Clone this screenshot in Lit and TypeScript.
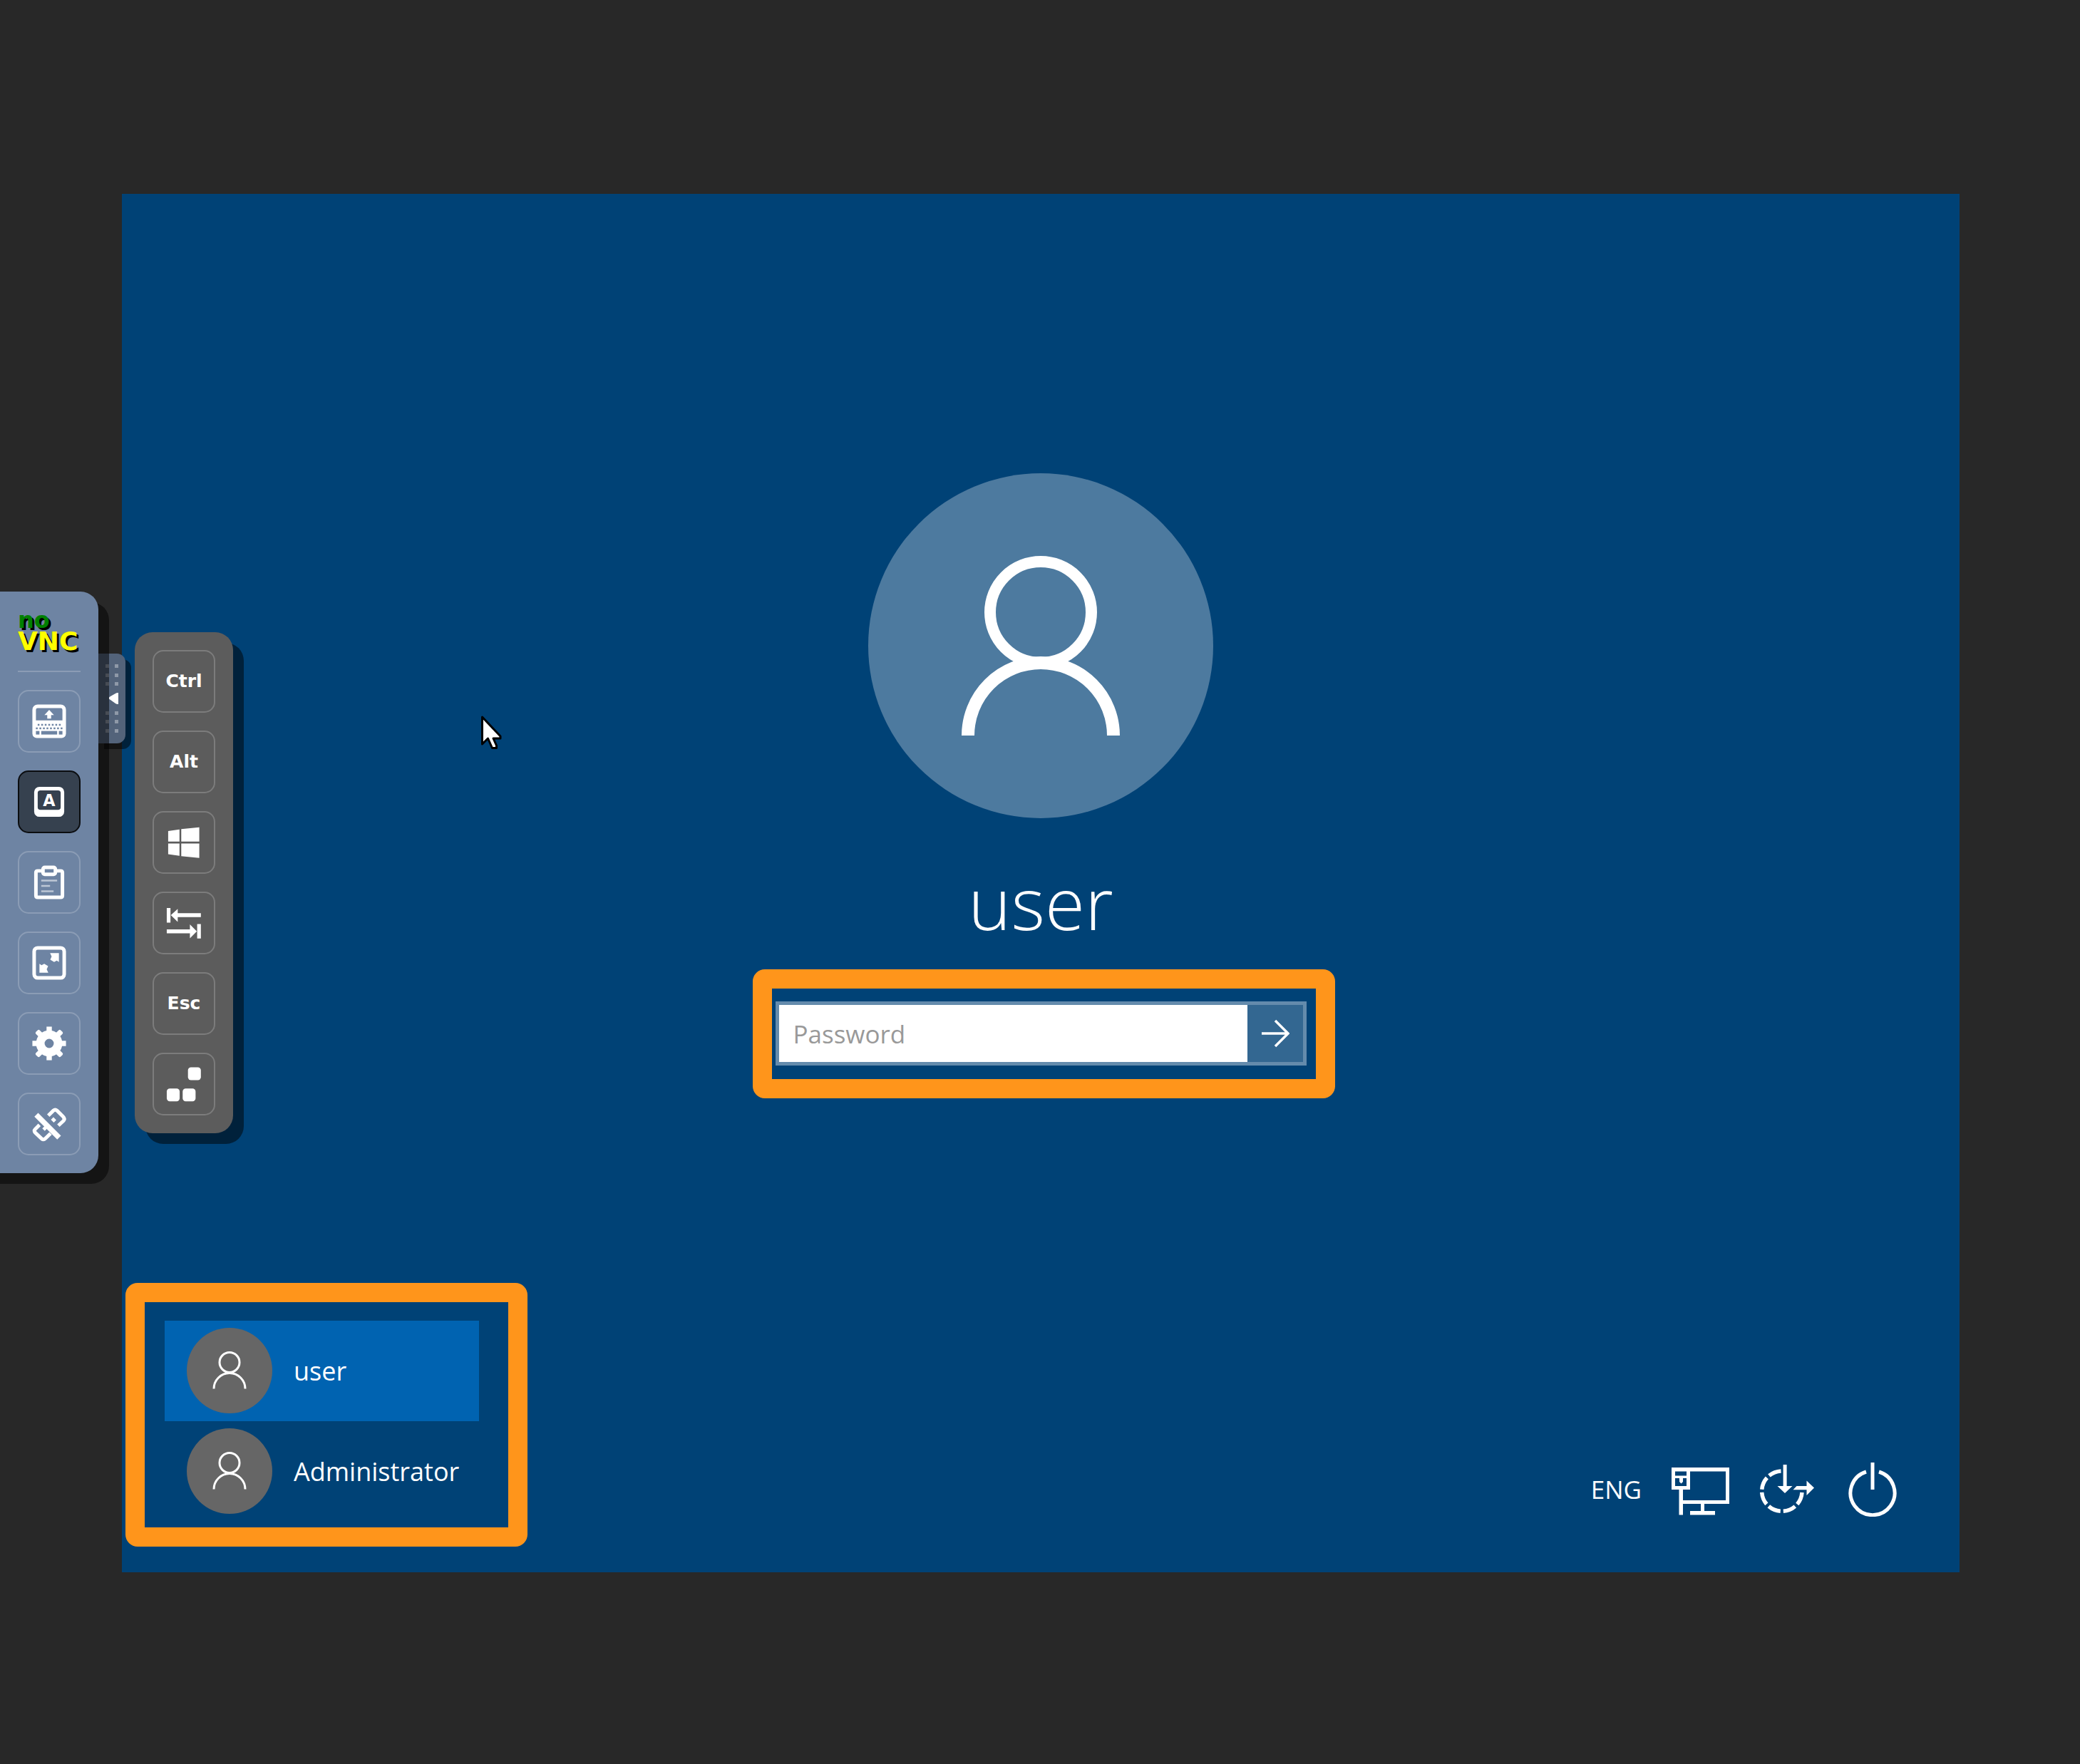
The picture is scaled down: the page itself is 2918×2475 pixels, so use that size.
import { LitElement, html, css, svg, type SVGTemplateResult } from "lit";
import { customElement, property } from "lit/decorators.js";

/* 25-unit glyphs used on the two tool panels. */
const range = (from: number, count: number) => Array.from({ length: count }, (_, i) => from + i * 2);

const glyphs: Record<string, SVGTemplateResult> = {
  keyboard: svg`
    <path fill-rule="evenodd" d="M6 3H19A3 3 0 0 1 22 6V19.500A2.500 2.500 0 0 1 19.500 22H5.500A2.500 2.500 0 0 1 3 19.500V6A3 3 0 0 1 6 3ZM6 5A1 1 0 0 0 5 6V12H20V6A1 1 0 0 0 19 5Z"/>
    <path d="M12.500 6L15.200 9H13.600V11H11.400V9H9.800Z"/>
    <g class="cut">
      ${range(6, 7).map((x) => svg`<rect x=${x} y="14" width="1" height="1"/>`)}
      ${range(5, 8).map((x) => svg`<rect x=${x} y="16" width="1" height="1"/>`)}
      <rect x="5" y="18" width="2" height="2"/><rect x="8" y="18" width="9" height="2"/><rect x="18" y="18" width="2" height="2"/>
    </g>`,
  keys: svg`
    <path fill-rule="evenodd" d="M7 4H18A3 3 0 0 1 21 7V18A3 3 0 0 1 18 21H7A3 3 0 0 1 4 18V7A3 3 0 0 1 7 4ZM7.500 6A1.500 1.500 0 0 0 6 7.500V15.500A1.500 1.500 0 0 0 7.500 17H17.500A1.500 1.500 0 0 0 19 15.500V7.500A1.500 1.500 0 0 0 17.500 6Z"/>
    <text x="12.500" y="14.800" text-anchor="middle" font-size="9">A</text>`,
  clipboard: svg`
    <path d="M9 6H6Q5 6 5 7V20Q5 21 6 21H19Q20 21 20 20V7Q20 6 19 6H16" fill="none" stroke="#fff" stroke-width="2"/>
    <path fill-rule="evenodd" d="M10 3H15A2 2 0 0 1 17 5V7A2 2 0 0 1 15 9H10A2 2 0 0 1 8 7V5A2 2 0 0 1 10 3ZM10 5V7H15V5Z"/>
    <path d="M8 11H17V12H8ZM8 14H13V15H8ZM8 17H15V18H8Z" opacity="0.550"/>`,
  fullscreen: svg`
    <rect x="4" y="4" width="17" height="17" rx="2" fill="none" stroke="#fff" stroke-width="2"/>
    <path d="M13 7H18V12L16.800 11.200L15.300 12L13.100 10.700L13.900 8.900Z"/>
    <path d="M12 18H7V13L8.200 13.800L9.700 13L11.900 14.300L11.100 16.100Z"/>`,
  settings: svg`
    <circle cx="12.500" cy="12.500" r="5" fill="none" stroke="#fff" stroke-width="4.800"/>
    ${[0, 90, 180, 270].map((a) => svg`<rect x="11" y="3" width="3" height="4" transform=${`rotate(${a} 12.5 12.5)`}/>`)}
    ${[45, 135, 225, 315].map((a) => svg`<rect x="11" y="2.600" width="3" height="4.400" rx="0.800" transform=${`rotate(${a} 12.5 12.5)`}/>`)}`,
  disconnect: svg`
    <g fill="none" stroke="#fff" stroke-width="2">
      <path d="M12 7.800L14.900 4.900Q15.900 4 16.900 4.900L20.300 8.300Q21.600 9.600 20.600 10.700L17.700 13.400"/>
      <path d="M7 13L4.600 15.400Q3.600 16.400 4.600 17.400L8.200 20.800Q9.300 21.800 10.400 20.700L13.300 17.800"/>
      <path d="M14.200 9.400L15.800 11M9.300 15.700L11.500 13.500"/>
      <path d="M5.200 7.300L18.100 20.200" stroke-width="3"/>
    </g>`,
  windows: svg`
    <path d="M3.600 6L10 5.100V12H3.600ZM11 4.950L21.200 3.900V12H11ZM3.600 13.100H10V20.100L3.600 19.200ZM11 13.100H21.200V21.300L11 20.250Z"/>`,
  tab: svg`
    <path d="M2.800 4H4.900V12.300H2.800ZM5.100 8.100L9 4.500V7H22.100V9.200H9V11.900ZM2.800 16.100H15.900V13.300L19.800 17.200L15.900 21.200V18.300H2.800ZM20 13.100H22.100V21.300H20Z"/>`,
  cad: svg`
    <rect x="14.800" y="3" width="7.300" height="7.300" rx="1.700"/>
    <rect x="2.800" y="15" width="7.300" height="7.300" rx="1.700"/>
    <rect x="11.800" y="15" width="7.300" height="7.300" rx="1.700"/>`,
};

@customElement("tool-button")
class ToolButton extends LitElement {
  @property() glyph = "";
  @property() text = "";
  @property() name = "";
  @property({ type: Boolean, reflect: true }) pressed = false;

  static styles = css`
    :host { display: block; }
    .tool {
      display: grid;
      place-items: center;
      box-sizing: border-box;
      width: 88px;
      height: 88px;
      padding: 0;
      border: 2px solid rgba(255, 255, 255, 0.2);
      border-radius: 15px;
      background: none;
      color: #fff;
      font: bold 25px/30px "DejaVu Sans", sans-serif;
    }
    :host([pressed]) .tool { border-color: #0b0d10; background: #36414f; }
    .glyph { display: block; width: 62px; height: 62px; fill: #fff; }
    .glyph text { font-family: "DejaVu Sans", sans-serif; font-weight: bold; }
    .cut { fill: #6e84a3; }
  `;

  render() {
    return html`<button class="tool" type="button" aria-label=${this.name} aria-pressed=${this.pressed}>
      ${this.glyph
        ? html`<svg class="glyph" viewBox="0 0 25 25" aria-hidden="true">${glyphs[this.glyph]}</svg>`
        : this.text}
    </button>`;
  }
}

@customElement("vnc-tools")
class VncTools extends LitElement {
  static styles = css`
    :host { display: block; }
    .tools { display: flex; align-items: center; gap: 51px; height: 100%; isolation: isolate; }
    .panel {
      position: relative;
      display: flex;
      flex-direction: column;
      align-items: center;
      gap: 25px;
      padding: 25px;
      border-radius: 25px;
      box-shadow: 15px 15px 0 rgba(0, 0, 0, 0.5);
    }
    /* The bar starts off-screen so that its shadow reaches the window edge. */
    .bar { margin-left: -15px; padding-left: 40px; border-radius: 0 25px 25px 0; background: #6e84a3; }
    .keys { margin-top: 2px; background: #5c5c5c; }
    .logo {
      width: 88px;
      height: 61px;
      margin: 0;
      white-space: pre-line;
      font: bold 36px/30px "DejaVu Sans", sans-serif;
      color: #ff0;
      text-shadow: 3px 3px 0 #000;
    }
    .logo::first-line { font-size: 32px; color: #008000; }
    .rule { width: 88px; height: 2px; margin: 0; border: 0; background: rgba(255, 255, 255, 0.2); }
    .handle {
      position: absolute;
      z-index: -1;
      top: 87px;
      left: 100%;
      width: 38px;
      height: 126px;
      padding: 0;
      border: 0;
      border-radius: 0 12px 12px 0;
      background: #53637a;
      box-shadow: 8px 8px 0 rgba(0, 0, 0, 0.5);
    }
    .dots { display: block; width: 38px; height: 126px; fill: rgba(255, 255, 255, 0.35); }
    .arrow { position: absolute; top: 142px; left: calc(100% + 15px); width: 13px; height: 16px; fill: #fff; pointer-events: none; }
  `;

  render() {
    return html`<nav class="tools">
      <div class="panel bar">
        <h1 class="logo">${"no\nVNC"}</h1>
        <hr class="rule" />
        <tool-button glyph="keyboard" name="Show keyboard"></tool-button>
        <tool-button glyph="keys" name="Show extra keys" pressed></tool-button>
        <tool-button glyph="clipboard" name="Clipboard"></tool-button>
        <tool-button glyph="fullscreen" name="Full screen"></tool-button>
        <tool-button glyph="settings" name="Settings"></tool-button>
        <tool-button glyph="disconnect" name="Disconnect"></tool-button>
        <button class="handle" type="button" aria-label="Hide the control bar">
          <svg class="dots" viewBox="0 0 38 126" aria-hidden="true">
            ${[15, 28, 40, 81, 93, 106].map(
              (y) => svg`<rect x="10" y=${y} width="5" height="5"/><rect x="23" y=${y} width="5" height="5"/>`
            )}
          </svg>
        </button>
        <svg class="arrow" viewBox="0 0 13 16" aria-hidden="true"><path d="M0 7Q0 6 2 5L9 1Q10 0 13 0V16Q10 16 9 15L2 10Q0 9 0 8Z"/></svg>
      </div>
      <div class="panel keys">
        <tool-button text="Ctrl" name="Ctrl"></tool-button>
        <tool-button text="Alt" name="Alt"></tool-button>
        <tool-button glyph="windows" name="Windows"></tool-button>
        <tool-button glyph="tab" name="Tab"></tool-button>
        <tool-button text="Esc" name="Esc"></tool-button>
        <tool-button glyph="cad" name="Ctrl+Alt+Del"></tool-button>
      </div>
    </nav>`;
  }
}

@customElement("login-screen")
class LoginScreen extends LitElement {
  static styles = css`
    :host { display: block; }
    .screen {
      position: relative;
      display: flex;
      flex-direction: column;
      justify-content: space-between;
      box-sizing: border-box;
      width: 100%;
      aspect-ratio: 4 / 3;
      padding: 392px 88px 71px 60px;
      background: #004276;
      color: #fff;
      font: 400 35px/48px "Open Sans", "Noto Sans", sans-serif;
    }
    .signin { display: flex; flex-direction: column; align-items: center; margin-right: -28px; }
    .signin, .footer { position: relative; }
    .portrait { display: block; width: 484px; height: 484px; }
    .name { margin: 38px 0 0; font-size: 102px; line-height: 160px; font-weight: 300; }
    .marked { position: relative; }
    .marked::after {
      content: "";
      position: absolute;
      inset: var(--reach);
      border: 27px solid #ff951b;
      border-radius: 17px;
      pointer-events: none;
    }
    .field {
      --reach: -50px -45px -51px -37px;
      display: flex;
      box-sizing: border-box;
      width: 745px;
      height: 90px;
      margin-top: 59px;
      border: 5px solid #648bac;
    }
    .password {
      flex: 1;
      min-width: 0;
      padding: 2px 20px 0;
      border: 0;
      border-radius: 0;
      outline: 0;
      background: #fff;
      color: #222;
      font: inherit;
    }
    .password::placeholder { color: #999; opacity: 1; }
    .go { display: grid; place-items: center; width: 78px; padding: 0; border: 0; background: #336791; }
    .go svg { width: 40px; height: 40px; }
    .line { fill: none; stroke: #fff; }
    .footer { display: flex; align-items: flex-end; justify-content: space-between; }
    .users { --reach: -53px -68px -35px -55px; margin: 0; padding: 0; list-style: none; font-size: 36px; }
    .user {
      display: flex;
      align-items: center;
      gap: 30px;
      box-sizing: border-box;
      width: 441px;
      height: 141px;
      padding: 0 31px;
      border: 0;
      background: none;
      color: #fff;
      font: inherit;
      text-align: left;
    }
    .user.current { background: #0063b1; }
    .user svg { flex: none; width: 120px; height: 120px; }
    .label { padding-top: 2px; }
    .tray { display: flex; align-items: center; gap: 42px; padding-bottom: 7px; }
    .tray button { display: block; padding: 0; border: 0; background: none; color: #fff; font: inherit; }
    .tray svg { display: block; height: 76px; fill: #fff; }
    .wide { width: 82px; }
    .slim { width: 68px; }
    .pointer { position: absolute; top: 37.8%; left: 19.5%; width: 30px; height: 50px; }
  `;

  private user(name: string, current: boolean) {
    return html`<li>
      <button class="user ${current ? "current" : ""}" type="button">
        <svg viewBox="0 0 120 120" aria-hidden="true">
          <circle cx="60" cy="60" r="60" fill="#666" />
          <g class="line" stroke-width="3"><circle cx="60" cy="48.500" r="14" /><path d="M38 85.500A22 22 0 0 1 82 85.500" /></g>
        </svg>
        <span class="label">${name}</span>
      </button>
    </li>`;
  }

  render() {
    return html`<main class="screen">
      <form class="signin" @submit=${(e: Event) => e.preventDefault()}>
        <svg class="portrait" viewBox="0 0 484 484" aria-hidden="true">
          <circle cx="242" cy="242" r="242" fill="#4d7a9f" />
          <g class="line"><circle cx="242" cy="195" r="71" stroke-width="16" /><path d="M140 368A102 102 0 0 1 344 368" stroke-width="18" /></g>
        </svg>
        <h2 class="name">user</h2>
        <div class="field marked">
          <input class="password" type="password" placeholder="Password" aria-label="Password" />
          <button class="go" type="submit" aria-label="Submit">
            <svg viewBox="0 0 40 40" aria-hidden="true"><path class="line" stroke-width="3.500" d="M1 20H38M20 2L38 20L20 38" /></svg>
          </button>
        </div>
      </form>
      <div class="footer">
        <ul class="users marked">${this.user("user", true)}${this.user("Administrator", false)}</ul>
        <div class="tray">
          <button class="label" type="button">ENG</button>
          <button type="button" aria-label="Network">
            <svg class="wide" viewBox="0 0 82 76" aria-hidden="true">
              <path fill-rule="evenodd" d="M0 7H81V58H46V68H61V73.500H26V68H41V58H16V73.500H10.500V38H0ZM26 12.500V38H16V53H76V12.500ZM5 12.500V18.500H21V12.500ZM5 22V33H21V22H16V27L13.500 29.500L11 27V22Z" />
            </svg>
          </button>
          <button type="button" aria-label="Ease of access">
            <svg class="wide" viewBox="0 0 82 76" aria-hidden="true">
              <path class="line" stroke-width="5.500" stroke-dasharray="18 4.200" d="M59 42A28.200 28.200 0 1 1 29.500 12" />
              <path d="M32.600 3H37.600V33H45.500L35 43L24.500 33H32.600ZM51.500 33H65.500V25.500L76 35.500L65.500 46V38.200H46.500Z" />
            </svg>
          </button>
          <button type="button" aria-label="Power">
            <svg class="slim" viewBox="0 0 68 76" aria-hidden="true">
              <path class="line" stroke-width="5" d="M25 13A31 31 0 1 0 43 13M34 0V38" />
            </svg>
          </button>
        </div>
      </div>
      <svg class="pointer" viewBox="0 0 30 50" aria-hidden="true">
        <path d="M2.500 3V41L10.500 33L16.500 46.500H22.500V43L18 33H28V30Z" fill="#fff" stroke="#000" stroke-width="3" stroke-linejoin="round" />
      </svg>
    </main>`;
  }
}

@customElement("app-root")
class AppRoot extends LitElement {
  static styles = css`
    :host { display: block; }
    .page {
      position: relative;
      box-sizing: border-box;
      min-height: 100vh;
      padding: 272px 169px 0 171px;
      background: #282828;
    }
    .overlay { position: absolute; top: 0; bottom: 0; left: 0; }
  `;

  render() {
    return html`<div class="page">
      <login-screen></login-screen>
      <vnc-tools class="overlay"></vnc-tools>
    </div>`;
  }
}
